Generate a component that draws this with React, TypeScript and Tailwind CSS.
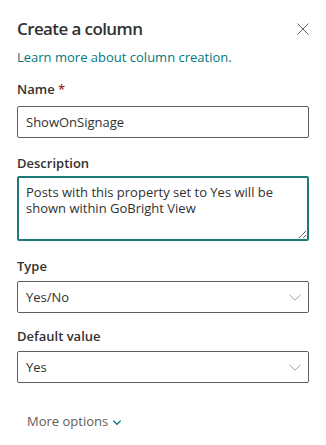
import { useState } from "react";

function Chevron({ className, width = 1 }: { className?: string; width?: number }) {
  return (
    <svg viewBox="0 0 12 7" className={className} fill="none" stroke="currentColor" strokeWidth={width}>
      <path d="M0.5 0.8 L6 6.2 L11.5 0.8" />
    </svg>
  );
}

function Select({ value }: { value: string }) {
  return (
    <div className="flex h-[32px] items-center justify-between rounded-[2px] border border-[#605e5c] pl-[8px] pr-[7px] text-[13px] leading-[20px] text-[#323130]">
      <span>{value}</span>
      <Chevron className="h-[7px] w-[12px] text-[#a19f9d]" />
    </div>
  );
}

export default function App() {
  const [name, setName] = useState("ShowOnSignage");
  const [desc, setDesc] = useState(
    "Posts with this property set to Yes will be shown within GoBright View"
  );

  return (
    <div
      className="h-[445px] w-[326px] overflow-hidden bg-white px-[17px] pt-[17px] text-[#323130]"
      style={{ fontFamily: '"Open Sans", "Noto Sans", sans-serif' }}
    >
      {/* header */}
      <div className="flex items-start justify-between">
        <h1 className="text-[17px] font-semibold leading-[24px] tracking-[-0.6px]">Create a column</h1>
        <button className="mt-[6px] text-[#605e5c]">
          <svg viewBox="0 0 12 12" className="h-[12px] w-[12px]" stroke="currentColor" strokeWidth="1">
            <path d="M0.5 0.5 L11.5 11.5 M11.5 0.5 L0.5 11.5" />
          </svg>
        </button>
      </div>

      <a href="#" className="mt-[6px] block text-[13px] leading-[20px] text-[#03787c]">
        Learn more about column creation.
      </a>

      {/* name */}
      <label className="mt-[12px] block text-[13px] font-semibold leading-[20px]">
        Name <span className="text-[#a4262c]">*</span>
      </label>
      <input
        value={name}
        onChange={(e) => setName(e.target.value)}
        className="mt-[7px] block h-[32px] w-full rounded-[2px] border border-[#605e5c] px-[8px] text-[13px] leading-[20px] outline-none"
      />

      {/* description */}
      <label className="mt-[15px] block text-[13px] font-semibold leading-[20px]">Description</label>
      <textarea
        value={desc}
        onChange={(e) => setDesc(e.target.value)}
        className="mt-[3px] block h-[65px] w-full rounded-[2px] border-2 border-[#1c7a7b] px-[7px] pt-[6px] text-[13px] leading-[16px] outline-none"
      />

      {/* type */}
      <label className="mt-[15px] block text-[13px] font-semibold leading-[20px]">Type</label>
      <div className="mt-[5px]">
        <Select value="Yes/No" />
      </div>

      {/* default */}
      <label className="mt-[13px] block text-[13px] font-semibold leading-[20px]">Default value</label>
      <div className="mt-[5px]">
        <Select value="Yes" />
      </div>

      <button className="mt-[28px] ml-[10px] flex items-center gap-[5px] text-[13px] leading-[20px] text-[#605e5c]">
        More options
        <Chevron className="mt-[2px] h-[5px] w-[8px] text-[#03787c]" width={2} />
      </button>
    </div>
  );
}
